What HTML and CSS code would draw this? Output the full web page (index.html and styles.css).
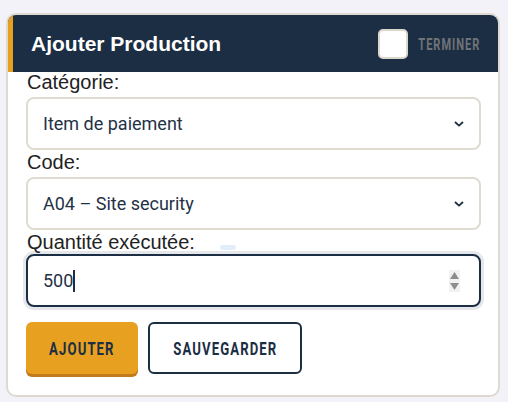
FILE: index.html
```html
<!DOCTYPE html>
<html lang="fr">
<head>
    <meta charset="UTF-8">
    <meta name="viewport" content="width=device-width, initial-scale=1.0">
    <title>Ajouter Production</title>
    <link rel="stylesheet" href="styles.css">
</head>
<body>
    <div class="card">
        <div class="card-header">
            <h2>Ajouter Production</h2>
            <label class="finish">
                <span class="checkbox"></span>
                <span class="condensed finish-text">TERMINER</span>
            </label>
        </div>
        <div class="card-body">
            <div class="label">Catégorie:</div>
            <div class="select">
                <span>Item de paiement</span>
                <svg width="10" height="6" viewBox="0 0 10 6"><path d="M1 1l4 3.6L9 1" fill="none" stroke="#1b2e44" stroke-width="1.8"/></svg>
            </div>
            <div class="label">Code:</div>
            <div class="select">
                <span>A04 – Site security</span>
                <svg width="10" height="6" viewBox="0 0 10 6"><path d="M1 1l4 3.6L9 1" fill="none" stroke="#1b2e44" stroke-width="1.8"/></svg>
            </div>
            <div class="label label-tight">Quantité exécutée: <span class="pill"></span></div>
            <div class="input">
                <span class="value">500</span><span class="caret"></span>
                <svg class="spinner" width="11" height="22" viewBox="0 0 11 22">
                    <rect width="11" height="22" fill="#f1f1f1"/>
                    <path d="M5.5 2L10 9H1z" fill="#8d8d8d"/>
                    <path d="M5.5 20L10 13H1z" fill="#8d8d8d"/>
                </svg>
            </div>
            <div class="actions">
                <button class="btn btn-primary"><span class="condensed">AJOUTER</span></button>
                <button class="btn btn-outline"><span class="condensed">SAUVEGARDER</span></button>
            </div>
        </div>
    </div>
</body>
</html>
```

FILE: styles.css
```css
* {
    margin: 0;
    padding: 0;
    box-sizing: border-box;
}

body {
    font-family: "Liberation Sans", Arial, sans-serif;
    background-color: #f3f2f8;
    padding: 13px 8px 0 6px;
}

.card {
    width: 494px;
    background-color: #fff;
    border: 2px solid #dedad1;
    border-radius: 10px;
    overflow: hidden;
}

.card-header {
    display: flex;
    align-items: center;
    justify-content: space-between;
    height: 57px;
    background-color: #1b2e44;
    border-left: 5px solid #e8a020;
    padding: 0 17px 0 18px;
}

.card-header h2 {
    color: #fff;
    font-size: 21px;
    font-weight: bold;
}

.finish {
    display: flex;
    align-items: center;
    gap: 9px;
}

.checkbox {
    width: 30px;
    height: 30px;
    background-color: #fff;
    border: 2px solid #dcd7cd;
    border-radius: 5px;
}

.condensed {
    display: inline-block;
    font-family: Roboto, sans-serif;
    font-weight: 700;
    font-size: 18px;
    letter-spacing: 1.5px;
    transform: scaleX(0.73);
}

.finish-text {
    font-size: 17px;
    color: #6f7376;
    transform: scaleX(0.65);
    transform-origin: right center;
    margin-left: -32px;
    margin-right: 1px;
}

.card-body {
    padding: 0 17px 21px 18px;
}

.label {
    font-size: 20px;
    line-height: 21px;
    color: #222;
    padding-left: 1px;
    margin-bottom: 4px;
}

.label-tight {
    margin-bottom: 1px;
}

.pill {
    display: inline-block;
    width: 16px;
    height: 5px;
    margin-left: 20px;
    border-radius: 3px;
    background-color: #e2edfa;
    vertical-align: -1px;
}

.select,
.input {
    display: flex;
    align-items: center;
    justify-content: space-between;
    height: 53px;
    border: 2px solid #dfdbd1;
    border-radius: 8px;
    padding: 0 15px 0 15px;
    font-family: Roboto, sans-serif;
    font-size: 18px;
    color: #1f3246;
    margin-bottom: 2px;
}

.input {
    justify-content: flex-start;
    border-color: #1b2e44;
    box-shadow: 0 0 0 3px #e6e7eb;
    margin-bottom: 15px;
    padding-right: 19px;
}

.caret {
    width: 2px;
    height: 22px;
    background-color: #1b2e44;
}

.spinner {
    margin-left: auto;
}

.actions {
    display: flex;
    gap: 10px;
}

.btn {
    height: 52px;
    border-radius: 6px;
    color: #1b2e44;
    cursor: pointer;
}

.btn-primary {
    width: 112px;
    background-color: #e8a020;
    border: none;
    box-shadow: 0 3px 0 #c27b1b;
}

.btn-outline {
    width: 154px;
    background-color: #fff;
    border: 2px solid #1b2e44;
}
```
